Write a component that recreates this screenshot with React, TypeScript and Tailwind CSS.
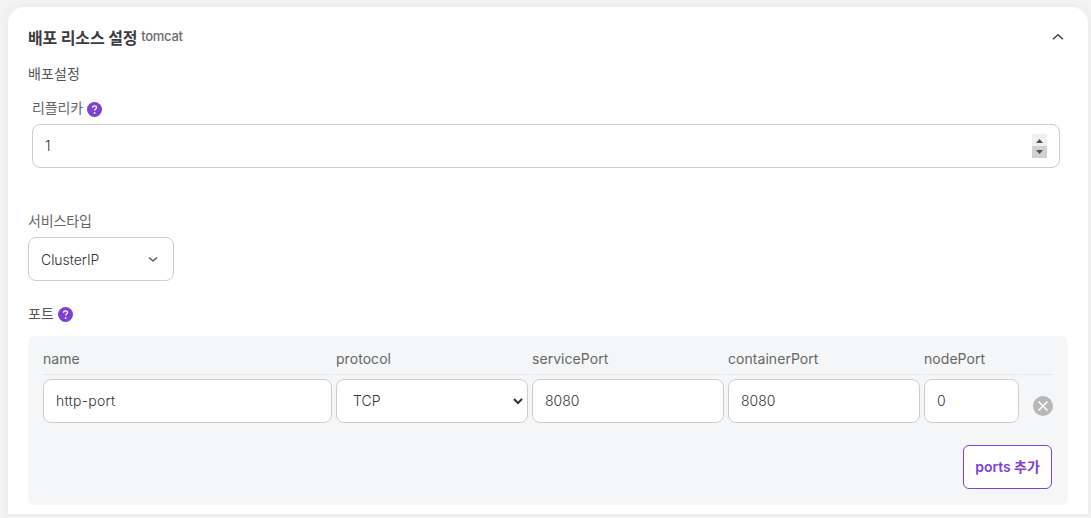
import React from "react";

const field = "h-11 rounded-lg border border-[#cdcdd0] bg-white text-[#333]";

function HelpIcon() {
  return (
    <svg width="15" height="15" viewBox="0 0 15 15" fill="none" className="shrink-0">
      <circle cx="7.5" cy="7.5" r="7.5" fill="#7b42d3" />
      <path d="M5.5 5.8c0-1.2.9-1.9 2-1.9s2 .7 2 1.8c0 1.4-1.9 1.4-1.9 2.9" stroke="#fff" strokeWidth="1.3" />
      <circle cx="7.6" cy="10.9" r=".85" fill="#fff" />
    </svg>
  );
}

function Header({ children }: { children?: React.ReactNode }) {
  return <div className="h-[31px] border-b border-[#e7e8ea] pl-px leading-[29px] tracking-[0.05px] text-[#666]">{children}</div>;
}

function Cell({ value }: { value: string }) {
  return <div className={`${field} mx-px flex items-center pl-3 font-[350]`}>{value}</div>;
}

export default function App() {
  return (
    <div className="h-[518px] overflow-hidden bg-[#f3f3f4] pt-[7px] pr-[3px] pl-2 text-sm font-['Inter','Noto_Sans_CJK_KR',sans-serif]">
      <section className="h-[507px] rounded-t-2xl bg-white pr-5 pl-5 shadow-[0_0_8px_rgba(60,70,100,0.07)]">
        <header className="flex h-[61px] items-center justify-between pr-1">
          <div className="flex items-center gap-1">
            <h2 className="text-base leading-6 font-bold tracking-[-0.15px] text-[#3c3c40]">배포 리소스 설정</h2>
            <span className="relative -top-px text-[13px] font-medium tracking-[-0.3px] text-[#6b6b70]">tomcat</span>
          </div>
          <svg width="12" height="8" viewBox="0 0 12 8" fill="none" stroke="#444" strokeWidth="1.5" className="relative -top-px">
            <path d="M1 6.3 6 1.8l5 4.5" />
          </svg>
        </header>
        <h3 className="h-3 leading-3 tracking-[0.1px] text-[#555]">배포설정</h3>
        <div className="mt-[14px] px-1 pr-1">
          <div className="flex h-[30px] items-center gap-1 text-[#666]">
            <span className="relative -top-px tracking-[-0.1px]">리플리카</span>
            <HelpIcon />
          </div>
          <div className={`${field} flex w-[1028px] items-center justify-between pr-3 pl-3 font-[350]`}>
            <span>1</span>
            <svg width="15" height="24" viewBox="0 0 15 24">
              <path d="M0 0h15v12H0z" fill="#f0f0f0" />
              <path d="M0 12h15v12H0z" fill="#d1d1d1" />
              <path d="M4 9 7.5 5 11 9zM4 16l3.5 4 3.5-4z" fill="#505050" />
            </svg>
          </div>
        </div>
        <div className="mt-[38px] flex h-[29px] items-center tracking-[-0.1px] text-[#666]">서비스타입</div>
        <div className={`${field} mt-[2px] flex w-[146px] items-center justify-between pr-[15px] pl-3`}>
          <span className="pt-px font-[350] tracking-[-0.05px]">ClusterIP</span>
          <svg width="10" height="7" viewBox="0 0 10 7" fill="none" stroke="#444" strokeWidth="1.2">
            <path d="m1 1.5 4 3.5 4-3.5" />
          </svg>
        </div>
        <div className="mt-[17px] flex h-[33px] items-center gap-1 text-[#555]">
          <span className="relative -top-px tracking-[0.1px]">포트</span>
          <HelpIcon />
        </div>
        <div className="mt-[5px] h-[169px] rounded-lg bg-[#f4f6f8] px-[14px] pt-2">
          <div className="grid grid-cols-[291px_194px_194px_194px_97px_32px] gap-x-[2px] gap-y-1">
            <Header>name</Header>
            <Header>protocol</Header>
            <Header>servicePort</Header>
            <Header>containerPort</Header>
            <Header>nodePort</Header>
            <Header />
            <div className={`${field} mx-px flex items-center pl-3 font-[350] tracking-[0.25px]`}>http-port</div>
            <div className={`${field} mx-px flex items-center justify-between pr-1 pl-4 font-[350]`}>
              <span>TCP</span>
              <svg width="10" height="8" viewBox="0 0 10 8" fill="none" stroke="#333" strokeWidth="2">
                <path d="m1 2 4 4 4-4" />
              </svg>
            </div>
            <Cell value="8080" />
            <Cell value="8080" />
            <Cell value="0" />
            <svg width="20" height="20" viewBox="0 0 20 20" fill="none" className="mt-[17px] ml-[11px]">
              <circle cx="10" cy="10" r="10" fill="#b8b8b8" />
              <path d="m5.5 5.5 9 9m0-9-9 9" stroke="#fff" strokeWidth="1.5" />
            </svg>
          </div>
          <div className="mt-[22px] flex justify-end pr-[2px]">
            <button className="h-11 w-[89px] rounded-md border border-[#7b42d3] bg-white font-semibold whitespace-nowrap tracking-[-0.05px] text-[#7b42d3]">
              ports 추가
            </button>
          </div>
        </div>
      </section>
    </div>
  );
}
